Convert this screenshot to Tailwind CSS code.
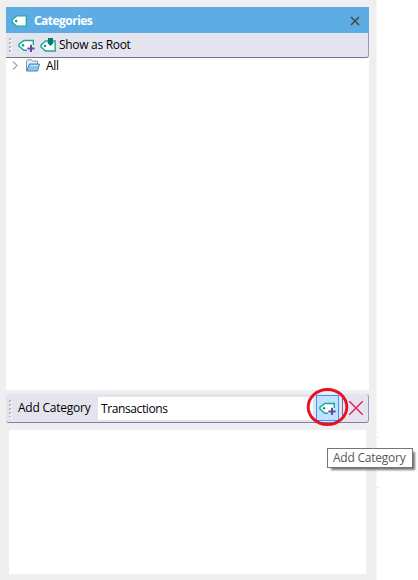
<!DOCTYPE html>
<html lang="en"><head><meta charset="utf-8"><title>Categories</title>
<script src="https://cdn.jsdelivr.net/npm/@tailwindcss/browser@4"></script></head>
<body class="w-[418px] h-[580px] overflow-hidden bg-white relative text-black text-[12px] leading-4 font-['Open_Sans','Noto_Sans',sans-serif] tracking-[-0.3px] whitespace-nowrap">
<svg class="hidden">
  <symbol id="tag" viewBox="0 0 16 12"><path d="M5.5 1H15.3V11H5.5L1.2 7.2V4.8Z" fill="#fff" stroke="#14a99a" stroke-width="1.2"/><circle cx="5.2" cy="6" r="1.2" fill="#0b9384"/></symbol>
  <symbol id="tagplus" viewBox="0 0 17 14"><path d="M15.3 6V1.5H6L1 5.2V7.2L6 11.3H9" fill="#fff" stroke="#14a99a" stroke-width="1.4"/><circle cx="5" cy="6.2" r="1.2" fill="#0b9384"/><path d="M13 5.8V13M9.4 9.4H16.6" stroke="#5b4ba8" stroke-width="2"/></symbol>
</svg>
<main class="w-[377px] h-[580px] bg-[#efefef] border-r border-[#f7f7fa] pt-[7px] pl-[6px] pr-[7px] flex flex-col">
  <header class="h-[26px] shrink-0 bg-[#5dade4] flex items-center pl-[5px] pr-[9px] text-white font-bold">
    <svg class="w-[16px] h-[12px] mt-px"><use href="#tag"/></svg>
    <span class="ml-[7px] mt-px text-[12px] tracking-[-0.53px]">Categories</span>
    <svg class="ml-auto mt-[2px] w-[10px] h-[10px]" viewBox="0 0 10 10"><path d="M1 1L9 9M9 1L1 9" stroke="#4b4b4b" stroke-width="1.7"/></svg>
  </header>
  <div class="h-[25px] shrink-0 bg-[#e4e4ef] border-b border-[#77738f] border-r border-r-[#9c96bd] rounded-br-[3px] flex items-center pl-[3px]">
    <svg class="w-[3px] h-[17px] mr-[6px]" viewBox="0 0 3 17"><path d="M2 2V17" stroke="#fff" stroke-width="2" stroke-dasharray="2 2"/><path d="M1 1V16" stroke="#b5b5bd" stroke-width="2" stroke-dasharray="2 2"/></svg>
    <svg class="w-[17px] h-[14px] mt-[2px]"><use href="#tagplus"/></svg>
    <svg class="w-[16px] h-[14px] ml-[5px] -mt-px" viewBox="0 0 16 14"><path d="M5.5 3H15.2V13H5.5L1 9V7Z" fill="#fff" stroke="#14a99a" stroke-width="1.4"/><circle cx="5" cy="8" r="1.2" fill="#0b9384"/><path d="M8 0H13V4.5H14L10.5 8L7 4.5H8Z" fill="#08796c"/></svg>
    <span class="ml-[3px]">Show as Root</span>
  </div>
  <section class="h-[332px] shrink-0 bg-white flex items-start pl-[6px]">
    <svg class="w-[6px] h-[9px] mt-[3px]" viewBox="0 0 6 9"><path d="M1 .5L5 4.5L1 8.5" fill="none" stroke="#a6a6a6" stroke-width="1.2"/></svg>
    <svg class="w-[16px] h-[13px] ml-[7px] mt-[1px]" viewBox="0 0 16 13"><path d="M1.5 12V2L3 .7H6L7.5 2H12.5V5" fill="#e3edf6" stroke="#8195aa"/><path d="M1.5 12L4.5 5H14.5L12.5 12Z" fill="#8bc6f2" stroke="#4c84b5"/><path d="M5.5 6.5H13" stroke="#c9e6fa"/></svg>
    <span class="ml-[5px]">All</span>
  </section>
  <div class="mt-1 h-[29px] shrink-0 bg-[#e4e4ef] border-b border-[#817ca2] border-r border-r-[#9c96bd] rounded-[3px] flex items-center pl-[3px]">
    <svg class="w-[3px] h-[19px] mr-[6px]" viewBox="0 0 3 19"><path d="M2 2V19" stroke="#fff" stroke-width="2" stroke-dasharray="2 2"/><path d="M1 1V18" stroke="#b5b5bd" stroke-width="2" stroke-dasharray="2 2"/></svg>
    <span class="w-[80px] tracking-[-0.23px]">Add Category</span>
    <div class="h-[23px] w-[215px] bg-white pl-[3px] leading-[23px] tracking-[-0.4px]">Transactions</div>
    <div class="ml-[3px] w-[23px] h-[26px] bg-[#c2e0ff] border border-[#3399ff] flex items-center justify-center"><svg class="w-[17px] h-[14px] mt-[2px]"><use href="#tagplus"/></svg></div>
    <i class="ml-[3px] w-px h-[20px] bg-[#77738f]"></i>
    <svg class="ml-[6px] w-[14px] h-[14px] shrink-0" viewBox="0 0 14 14"><path d="M0 0L14 14M14 0L0 14" stroke="#e3265c" stroke-width="1.5"/></svg>
  </div>
  <section class="mt-[7px] mx-[3px] h-[144px] shrink-0 bg-white"></section>
</main>
<i class="absolute left-[377px] top-[437px] w-[2px] h-px bg-[#e5e5e5]"></i>
<i class="absolute left-[377px] top-[487px] w-[2px] h-px bg-[#e5e5e5]"></i>
<svg class="absolute left-[306px] top-[387px] w-[43px] h-[40px]" viewBox="0 0 43 40"><ellipse cx="21.5" cy="20" rx="19.3" ry="17.5" fill="none" stroke="#e81123" stroke-width="2.9"/></svg>
<div class="absolute left-[327px] top-[448px] w-[86px] h-[20px] bg-white border border-[#767676] shadow-[3px_3px_2px_-1px_#777] text-[#575757] pl-[5px] leading-[18px] tracking-[-0.23px]">Add Category</div>
</body></html>
